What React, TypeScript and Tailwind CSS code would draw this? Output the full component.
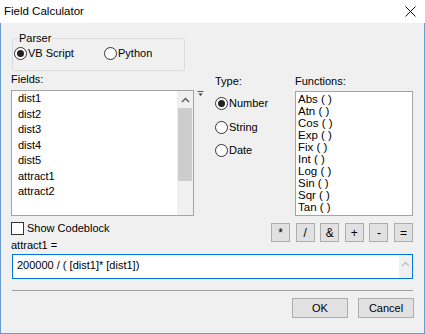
import React from "react";

const fields = ["dist1", "dist2", "dist3", "dist4", "dist5", "attract1", "attract2"];
const funcs = ["Abs ( )", "Atn ( )", "Cos ( )", "Exp ( )", "Fix ( )", "Int ( )", "Log ( )", "Sin ( )", "Sqr ( )", "Tan ( )"];
const ops = ["*", "/", "&", "+", "-", "="];

function Radio({ checked, label }: { checked?: boolean; label: string }) {
    return (
        <div className="flex items-center h-[13px]">
            <div className="w-[13px] h-[13px] rounded-full border border-[#333] bg-white flex items-center justify-center shrink-0">
                {checked && <div className="w-[7px] h-[7px] rounded-full bg-[#222]" />}
            </div>
            <span className="ml-[1px] leading-[13px]">{label}</span>
        </div>
    );
}

function ChevronUp({ color }: { color: string }) {
    return (
        <svg width="9" height="6" viewBox="0 0 9 6">
            <path d="M1 5 L4.5 1.5 L8 5" fill="none" stroke={color} strokeWidth="1.5" />
        </svg>
    );
}

export default function App() {
    return (
        <div className="w-[425px] h-[334px] bg-[#f0f0f0] text-[11px] text-black font-['Liberation_Sans',Arial,sans-serif] flex flex-col">
            {/* title bar */}
            <div className="h-[23px] bg-white flex items-center justify-between shrink-0">
                <span className="pl-[4px] text-[11.5px] leading-[23px]">Field Calculator</span>
                <svg width="11" height="11" viewBox="0 0 11 11" className="mr-[9px]">
                    <path d="M0.5 0.5 L10.5 10.5 M10.5 0.5 L0.5 10.5" stroke="#111" strokeWidth="1" />
                </svg>
            </div>

            <div className="flex-1 border-x border-b border-[#6b9bd2] pl-[10px] pr-[10px] flex flex-col">
                {/* parser group */}
                <div className="relative mt-[15px] w-[173px] h-[33px] border border-[#dcdcdc] rounded-[2px] ml-[1px] shrink-0">
                    <span className="absolute -top-[8px] left-[5px] bg-[#f0f0f0] px-[1px] leading-[14px]">Parser</span>
                    <div className="flex pt-[8px] pl-[1px]">
                        <div className="w-[90px]">
                            <Radio checked label="VB Script" />
                        </div>
                        <Radio label="Python" />
                    </div>
                </div>

                {/* main row */}
                <div className="flex">
                    <div className="flex flex-col">
                        <span className="mt-[1px] h-[14px] leading-[14px]">Fields:</span>
                        <div className="mt-[4px] w-[183px] h-[126px] border border-[#a5a5a5] bg-white flex">
                            <div className="flex-1 flex flex-col pl-[6px]">
                                {fields.map((f) => (
                                    <span key={f} className="leading-[15.5px] h-[15.5px]">{f}</span>
                                ))}
                            </div>
                            <div className="w-[16px] bg-[#f0f0f0] flex flex-col items-center">
                                <div className="h-[17px] flex items-center justify-center">
                                    <ChevronUp color="#606060" />
                                </div>
                                <div className="w-[14px] h-[73px] bg-[#cdcdcd]" />
                            </div>
                        </div>
                    </div>
                    <div className="ml-[3px] mt-[20px]">
                        <svg width="7" height="6" viewBox="0 0 7 6">
                            <path d="M0.5 0.5 H6.5" stroke="#555" strokeWidth="1" />
                            <path d="M1.5 2.5 L5.5 2.5 L3.5 5 Z" fill="#333" />
                        </svg>
                    </div>
                    <div className="ml-[11px] w-[80px] flex flex-col">
                        <span className="mt-[3px] h-[14px] leading-[14px]">Type:</span>
                        <div className="mt-[9px] flex flex-col gap-[10.5px]">
                            <Radio checked label="Number" />
                            <Radio label="String" />
                            <Radio label="Date" />
                        </div>
                    </div>
                    <div className="flex flex-col">
                        <span className="mt-[3px] h-[14px] leading-[14px]">Functions:</span>
                        <div className="mt-[3px] w-[118px] h-[125px] border border-[#a5a5a5] bg-white flex flex-col pl-[2px] pt-[1px]">
                            {funcs.map((f) => (
                                <span key={f} className="leading-[12px] h-[12px] text-[11.5px]">{f}</span>
                            ))}
                        </div>
                    </div>
                </div>

                {/* codeblock + operators */}
                <div className="flex justify-between mt-[6px]">
                    <div className="flex flex-col">
                        <div className="flex items-center h-[13px]">
                            <div className="w-[13px] h-[13px] border border-[#333] bg-white" />
                            <span className="ml-[3px]">Show Codeblock</span>
                        </div>
                        <span className="mt-[3px] h-[14px] leading-[14px]">attract1 =</span>
                    </div>
                    <div className="flex gap-[5.6px] mt-[1px] mr-[1px]">
                        {ops.map((o) => (
                            <div key={o} className="w-[19px] h-[19px] border border-[#adadad] bg-[#e1e1e1] flex items-center justify-center leading-none text-[12px]">
                                {o}
                            </div>
                        ))}
                    </div>
                </div>

                {/* expression */}
                <div className="mt-[2px] ml-[1px] mr-[1px] h-[25px] border border-[#0078d7] bg-white flex">
                    <span className="flex-1 pl-[4px] pt-[3px] leading-[14px]">200000 / ( [dist1]* [dist1])</span>
                    <div className="w-[13px] bg-[#f0f0f0] flex justify-center pt-[6px]">
                        <ChevronUp color="#c2c2c2" />
                    </div>
                </div>

                {/* separator */}
                <div className="mt-[11px] ml-[1px] mr-[1px] h-[1px] bg-[#a0a0a0]" />

                {/* buttons */}
                <div className="flex justify-end gap-[10px] mt-[7px]">
                    <div className="w-[56px] h-[20px] border border-[#adadad] bg-[#e1e1e1] flex items-center justify-center">OK</div>
                    <div className="w-[56px] h-[20px] border border-[#adadad] bg-[#e1e1e1] flex items-center justify-center">Cancel</div>
                </div>
            </div>
        </div>
    );
}
